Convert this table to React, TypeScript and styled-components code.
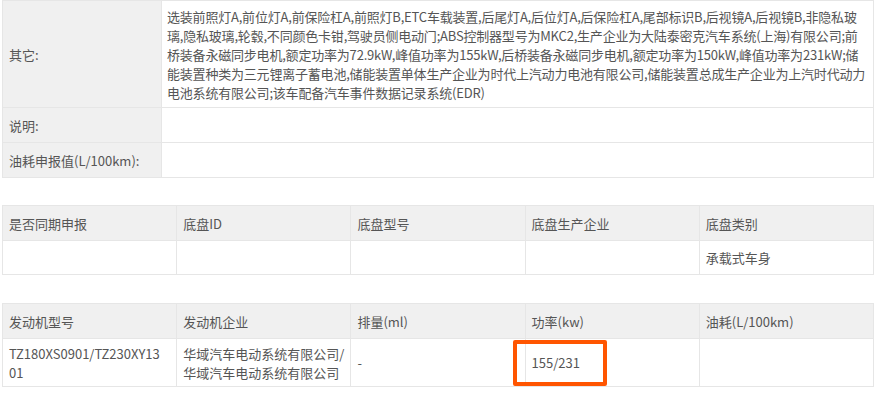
import React from 'react';
import styled, { createGlobalStyle } from 'styled-components';

const GlobalStyle = createGlobalStyle`
  body {
    margin: 0;
    background: #fff;
    font-family: "Microsoft YaHei", "Noto Sans CJK SC", "Noto Sans", sans-serif;
    color: #555;
  }
`;

const Page = styled.div`
  padding: 0 3px 0 2px;
  width: 872px;
`;

const Table = styled.table<{ $gap?: number }>`
  width: 872px;
  border-collapse: collapse;
  table-layout: fixed;
  margin-top: ${(p) => p.$gap ?? 0}px;
  font-size: 13px;
  line-height: 19px;
`;

const Label = styled.th`
  width: 146px;
  background: #f0f0f0;
  border: 1px solid #e6e6e6;
  font-weight: normal;
  text-align: left;
  padding: 0 6px;
  color: #555;
  white-space: nowrap;
`;

const Value = styled.td<{ $h: number }>`
  height: ${(p) => p.$h}px;
  border: 1px solid #e6e6e6;
  padding: 0 5px;
  color: #555;
  vertical-align: middle;
`;

const Long = styled(Value)`
  padding: 6px 5px 5px 5px;
  white-space: nowrap;
  letter-spacing: -0.2px;
`;

const Head = styled.th`
  height: 34px;
  background: #f0f0f0;
  border: 1px solid #e6e6e6;
  font-weight: normal;
  text-align: left;
  padding: 0 6px;
  color: #555;
`;

const Cell = styled.td<{ $h: number }>`
  position: relative;
  height: ${(p) => p.$h}px;
  border: 1px solid #e6e6e6;
  padding: 0 6px;
  color: #555;
`;

// orange highlight drawn over the power cell
const Mark = styled.span`
  position: absolute;
  left: -13px;
  top: 1px;
  width: 94px;
  height: 46px;
  box-sizing: border-box;
  border: 4px solid #ff5500;
  border-radius: 2px;
`;

const otherLines = [
  '选装前照灯A,前位灯A,前保险杠A,前照灯B,ETC车载装置,后尾灯A,后位灯A,后保险杠A,尾部标识B,后视镜A,后视镜B,非隐私玻',
  '璃,隐私玻璃,轮毂,不同颜色卡钳,驾驶员侧电动门;ABS控制器型号为MKC2,生产企业为大陆泰密克汽车系统(上海)有限公司;前',
  '桥装备永磁同步电机,额定功率为72.9kW,峰值功率为155kW,后桥装备永磁同步电机,额定功率为150kW,峰值功率为231kW;储',
  '能装置种类为三元锂离子蓄电池,储能装置单体生产企业为时代上汽动力电池有限公司,储能装置总成生产企业为上汽时代动力',
  '电池系统有限公司;该车配备汽车事件数据记录系统(EDR)',
];

function App(): React.ReactElement {
  return (
    <Page>
      <GlobalStyle />
      <Table>
        <tbody>
          <tr>
            <Label>其它:</Label>
            <Long $h={95}>
              {otherLines.map((line, i) => (
                <div key={i}>{line}</div>
              ))}
            </Long>
          </tr>
          <tr>
            <Label>说明:</Label>
            <Value $h={34} />
          </tr>
          <tr>
            <Label>油耗申报值(L/100km):</Label>
            <Value $h={34} />
          </tr>
        </tbody>
      </Table>

      <Table $gap={27}>
        <tbody>
          <tr>
            <Head>是否同期申报</Head>
            <Head>底盘ID</Head>
            <Head>底盘型号</Head>
            <Head>底盘生产企业</Head>
            <Head>底盘类别</Head>
          </tr>
          <tr>
            <Cell $h={33} />
            <Cell $h={33} />
            <Cell $h={33} />
            <Cell $h={33} />
            <Cell $h={33}>承载式车身</Cell>
          </tr>
        </tbody>
      </Table>

      <Table $gap={28}>
        <tbody>
          <tr>
            <Head>发动机型号</Head>
            <Head>发动机企业</Head>
            <Head>排量(ml)</Head>
            <Head>功率(kw)</Head>
            <Head>油耗(L/100km)</Head>
          </tr>
          <tr>
            <Cell $h={47}>TZ180XS0901/TZ230XY13<br />01</Cell>
            <Cell $h={47}>华域汽车电动系统有限公司/<br />华域汽车电动系统有限公司</Cell>
            <Cell $h={47}>-</Cell>
            <Cell $h={47}>
              155/231
              <Mark />
            </Cell>
            <Cell $h={47} />
          </tr>
        </tbody>
      </Table>
    </Page>
  );
}

export default App;
